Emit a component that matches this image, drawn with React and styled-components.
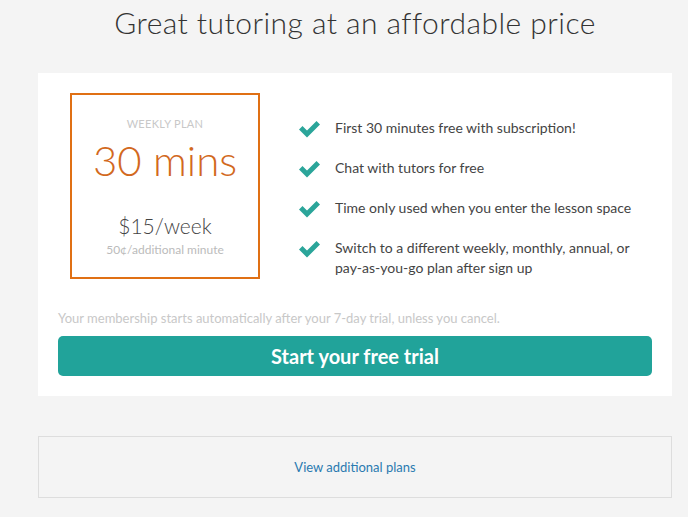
import styled, { createGlobalStyle } from "styled-components";

const GlobalStyle = createGlobalStyle`
  body {
    margin: 0;
    background: #f4f4f4;
    font-family: Lato, "Open Sans", sans-serif;
  }
`;

const Page = styled.div`
  width: 634px;
  margin-left: 38px;
  padding-top: 4px;
`;

const Title = styled.h1`
  margin: 0 0 20px;
  height: 49px;
  text-align: center;
  font-weight: 300;
  font-size: 30px;
  letter-spacing: 0.45px;
  color: #333;
`;

const Card = styled.div`
  background: #fff;
  padding: 20px 20px 20px 20px;
`;

const Top = styled.div`
  display: flex;
  align-items: flex-start;
`;

const PlanBox = styled.div`
  margin-left: 12px;
  width: 186px;
  height: 182px;
  border: 2px solid #e07014;
  display: flex;
  flex-direction: column;
  align-items: center;
  box-sizing: content-box;
`;

const PlanLabel = styled.div`
  margin-top: 22px;
  font-size: 11px;
  color: #c8c8c8;
  letter-spacing: 0.3px;
`;

const Minutes = styled.div`
  margin-top: 6px;
  font-size: 42px;
  font-weight: 300;
  color: #d2691e;
  line-height: 48px;
`;

const Price = styled.div`
  margin-top: 29px;
  font-size: 21px;
  font-weight: 300;
  color: #444;
  line-height: 26px;
`;

const Extra = styled.div`
  margin-top: 3px;
  font-size: 12px;
  color: #bbb;
`;

const Features = styled.ul`
  list-style: none;
  margin: 25px 0 0 38px;
  padding: 0;
  display: flex;
  flex-direction: column;
  gap: 20px;
`;

const Feature = styled.li`
  display: flex;
  align-items: flex-start;
  gap: 14px;
  font-size: 14px;
  line-height: 20px;
  color: #444;
`;

const FeatureText = styled.span`
  max-width: 310px;
`;

const CheckIcon = styled.svg`
  flex: none;
  width: 23px;
  height: 18px;
  margin-top: 2px;
`;

const Note = styled.p`
  margin: 31px 0 0;
  font-size: 13px;
  color: #c8c8c8;
`;

const TrialButton = styled.button`
  margin-top: 10px;
  width: 100%;
  height: 40px;
  border: none;
  border-radius: 5px;
  background: #21a39a;
  color: #fff;
  font-family: inherit;
  font-weight: 700;
  font-size: 20px;
`;

const MorePlans = styled.div`
  margin-top: 40px;
  height: 60px;
  border: 1px solid #ddd;
  display: flex;
  align-items: center;
  justify-content: center;
  font-size: 13px;
  color: #2a7ab0;
`;

const Check = () => (
  <CheckIcon viewBox="0 0 23 18">
    <path d="M1 9.5 L4.5 6 L9 10.5 L18.5 1 L22 4.5 L9 17.5 Z" fill="#2ba59a" />
  </CheckIcon>
);

const features = [
  "First 30 minutes free with subscription!",
  "Chat with tutors for free",
  "Time only used when you enter the lesson space",
  "Switch to a different weekly, monthly, annual, or pay-as-you-go plan after sign up",
];

export default function App() {
  return (
    <>
      <GlobalStyle />
      <Page>
        <Title>Great tutoring at an affordable price</Title>
        <Card>
          <Top>
            <PlanBox>
              <PlanLabel>WEEKLY PLAN</PlanLabel>
              <Minutes>30 mins</Minutes>
              <Price>$15/week</Price>
              <Extra>50¢/additional minute</Extra>
            </PlanBox>
            <Features>
              {features.map((f) => (
                <Feature key={f}>
                  <Check />
                  <FeatureText>{f}</FeatureText>
                </Feature>
              ))}
            </Features>
          </Top>
          <Note>Your membership starts automatically after your 7-day trial, unless you cancel.</Note>
          <TrialButton>Start your free trial</TrialButton>
        </Card>
        <MorePlans>View additional plans</MorePlans>
      </Page>
    </>
  );
}
